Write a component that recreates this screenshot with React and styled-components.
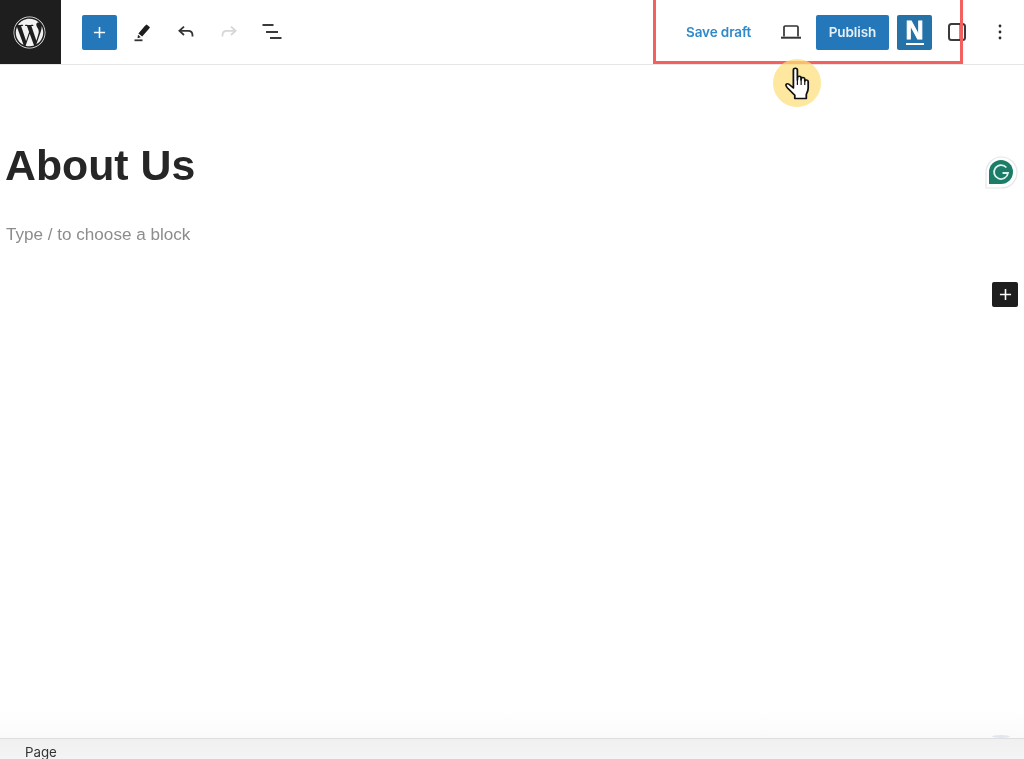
import React from 'react';
import styled, { createGlobalStyle } from 'styled-components';
import { FaWordpress } from 'react-icons/fa';

const Global = createGlobalStyle`
  html, body { margin: 0; padding: 0; background: #fff; }
  body { font-family: "Inter", "Liberation Sans", sans-serif; overflow: hidden; }
`;

const Page = styled.div`
  position: relative;
  width: 1024px;
  height: 759px;
  display: flex;
  flex-direction: column;
  overflow: hidden;
  background: #fff;
  filter: blur(0.45px);
`;

const TopBar = styled.header`
  flex: none;
  height: 64px;
  display: flex;
  align-items: center;
  border-bottom: 1px solid #e6e6e6;
`;

const LogoTile = styled.div`
  flex: none;
  width: 61px;
  height: 64px;
  box-sizing: border-box;
  padding-right: 3px;
  background: #1e1e1e;
  display: flex;
  align-items: center;
  justify-content: center;
  color: #f2f2f2;
  font-size: 33px;
`;

const LeftTools = styled.div`
  display: flex;
  align-items: center;
  margin-left: 21px;
`;

const AddButton = styled.div`
  width: 35px;
  height: 35px;
  border-radius: 2px;
  background: #2478b9;
  display: flex;
  align-items: center;
  justify-content: center;
  margin-right: 4px;
`;

const ToolIcon = styled.div`
  flex: none;
  width: ${p => p.$w || 43}px;
  height: 36px;
  display: flex;
  align-items: center;
  justify-content: center;
`;

const RightTools = styled.div`
  margin-left: auto;
  display: flex;
  align-items: center;
  padding-right: 6px;
`;

const SaveDraft = styled.span`
  color: #3089c9;
  font-size: 13.5px;
  font-weight: 600;
  width: 67px;
  white-space: nowrap;
  letter-spacing: -0.1px;
  margin-right: 16px;
`;

const Publish = styled.div`
  width: 73px;
  height: 35px;
  margin-left: 4px;
  border-radius: 2px;
  background: #2478b9;
  color: #e6f0f8;
  font-size: 13.5px;
  font-weight: 600;
  letter-spacing: -0.1px;
  display: flex;
  align-items: center;
  justify-content: center;
`;

const NTile = styled.div`
  width: 35px;
  height: 35px;
  box-sizing: border-box;
  padding-top: 3px;
  margin-left: 8px;
  border-radius: 2px;
  background: #2472a8;
  display: flex;
  flex-direction: column;
  align-items: center;
  color: #fff;
`;

const NLetter = styled.span`
  font-family: "Liberation Sans", sans-serif;
  font-weight: 700;
  font-size: 25px;
  line-height: 25px;
  height: 25px;
  -webkit-text-stroke: 0.8px #fff;
`;

const NBar = styled.span`
  width: 18px;
  height: 2px;
  background: #fff;
`;

const Content = styled.main`
  flex: 1;
  padding: 74px 0 0 5px;
  background: linear-gradient(to bottom, #fff 0, #fff 645px, #fafafa 674px);
  border-bottom: 1px solid #dedede;
`;

const Title = styled.h1`
  margin: 0;
  font-family: "Liberation Sans", Arial, sans-serif;
  font-size: 42.8px;
  line-height: 52px;
  font-weight: 700;
  color: #262626;
`;

const Placeholder = styled.p`
  margin: 32px 0 0 1px;
  font-family: "Liberation Sans", Arial, sans-serif;
  font-size: 17.1px;
  line-height: 24px;
  color: #8c8c8c;
`;

const Footer = styled.footer`
  flex: none;
  height: 20px;
  box-sizing: border-box;
  padding: 6px 0 0 25px;
  background: linear-gradient(to bottom, #f0f0f0, #f4f4f4);
  color: #333;
  font-size: 13.3px;
  line-height: 14px;
`;

const RedBox = styled.div`
  position: absolute;
  left: 653px;
  top: -3px;
  width: 310px;
  height: 67px;
  box-sizing: border-box;
  border: 3px solid #f4605f;
  pointer-events: none;
`;

const CursorHalo = styled.div`
  position: absolute;
  left: 773px;
  top: 59px;
  width: 48px;
  height: 48px;
  border-radius: 50%;
  background: rgba(253, 222, 120, 0.72);
  display: flex;
  align-items: center;
  justify-content: center;
`;

const Grammarly = styled.div`
  position: absolute;
  left: 985px;
  top: 156px;
  width: 33px;
  height: 33px;
`;

const FloatingAdd = styled.div`
  position: absolute;
  left: 992px;
  top: 282px;
  width: 26px;
  height: 25px;
  border-radius: 2px;
  background: #1e1e1e;
  display: flex;
  align-items: center;
  justify-content: center;
`;

const PeekingBadge = styled.div`
  position: absolute;
  left: 992px;
  top: 735px;
  width: 18px;
  height: 3px;
  border-radius: 50%;
  background: #e2e5ee;
`;

const Plus = ({ size, color }) => (
  <svg width={size} height={size} viewBox="0 0 14 14" fill="none" stroke={color} strokeWidth="1.7">
    <path d="M7 1v12M1 7h12" />
  </svg>
);

export default function App() {
  return (
    <>
      <Global />
      <Page>
        <TopBar>
          <LogoTile><FaWordpress /></LogoTile>
          <LeftTools>
            <AddButton><Plus size={13} color="#f4f8fb" /></AddButton>
            <ToolIcon>
              <svg width="20" height="20" viewBox="0 0 20 20">
                <path d="M13.6 2.400l3.400 2.800-1.200 1.900-6.600 7.500-3.800-3 6.400-7.700z M5 12.800l2.800 2.400-3.300 1z" fill="#1e1e1e" />
                <path d="M1.500 18.300h8" stroke="#333" strokeWidth="1.800" />
              </svg>
            </ToolIcon>
            <ToolIcon>
              <svg width="20" height="20" viewBox="0 0 20 20" fill="none" stroke="#333" strokeWidth="1.800">
                <path d="M8 4.600L3.400 8.800 8 13" />
                <path d="M3.600 8.800h8.600c2.600 0 4.300 1.800 4.300 4.400v1.400" />
              </svg>
            </ToolIcon>
            <ToolIcon>
              <svg width="20" height="20" viewBox="0 0 20 20" fill="none" stroke="#d6d6d6" strokeWidth="1.800">
                <path d="M12 4.600l4.600 4.200L12 13" />
                <path d="M16.400 8.800H7.800c-2.600 0-4.300 1.800-4.300 4.400v1.400" />
              </svg>
            </ToolIcon>
            <ToolIcon>
              <svg width="20" height="20" viewBox="0 0 20 20" fill="none" stroke="#3a3a3a" strokeWidth="2">
                <path d="M0.500 3h11M4 10h12M8 16h11.500" />
              </svg>
            </ToolIcon>
          </LeftTools>
          <RightTools>
            <SaveDraft>Save draft</SaveDraft>
            <ToolIcon $w={43}>
              <svg width="22" height="16" viewBox="0 0 22 16" fill="none" stroke="#333">
                <path d="M4 12.500V3.200c0-.7.500-1.200 1.200-1.200h11.600c.7 0 1.200.5 1.200 1.200v9.300" strokeWidth="1.700" />
                <path d="M1 13.700h20" strokeWidth="2" />
              </svg>
            </ToolIcon>
            <Publish>Publish</Publish>
            <NTile>
              <NLetter>N</NLetter>
              <NBar />
            </NTile>
            <ToolIcon $w={50}>
              <svg width="18" height="18" viewBox="0 0 18 18" fill="none" stroke="#3a3a3a" strokeWidth="2">
                <rect x="1" y="1" width="16" height="16" rx="2.500" />
                <path d="M12.500 1v16" />
              </svg>
            </ToolIcon>
            <ToolIcon $w={36}>
              <svg width="4" height="16" viewBox="0 0 4 16" fill="#2b2b2b">
                <circle cx="2" cy="2" r="1.400" />
                <circle cx="2" cy="8" r="1.400" />
                <circle cx="2" cy="14" r="1.400" />
              </svg>
            </ToolIcon>
          </RightTools>
        </TopBar>
        <Content>
          <Title>About Us</Title>
          <Placeholder>Type / to choose a block</Placeholder>
        </Content>
        <Footer>Page</Footer>

        <RedBox />
        <PeekingBadge />
        <CursorHalo>
          <svg width="27" height="33" viewBox="0 0 23 33" preserveAspectRatio="none" fill="#fff" stroke="#111" strokeWidth="1.500" strokeLinejoin="round">
            <path d="M8 3c0-2.400 3.400-2.400 3.400 0v10l.1-2.200c0-2 3-2 3 0V13l.2-1.200c.2-1.900 3-1.600 3 .3V14c.3-1.600 2.900-1.400 2.900.6v6.500c0 3-.8 4.300-1.600 6.200v4.200H9.200v-3.200L3.400 21.600c-1.600-2.100-2.200-3.400-1.500-4.300.8-1 2.200-.4 3.400 1L8 21z" />
            <path d="M11.400 13v5M14.600 13v5M17.700 13v5" strokeWidth="1" fill="none" />
          </svg>
        </CursorHalo>
        <Grammarly>
          <svg width="33" height="33" viewBox="0 0 33 33">
            <path d="M16.500 1a15.500 15.500 0 1 1 0 31H1V16.500A15.500 15.500 0 0 1 16.500 1z" fill="#fff" stroke="#e4e6ea" strokeWidth="1.200" />
            <path d="M16 4a12 12 0 1 1 0 24H4V16A12 12 0 0 1 16 4z" fill="#1b7d68" />
            <path d="M21.400 11.500a7 7 0 1 0 1.600 5.500h-5.500" fill="none" stroke="#dff1ec" strokeWidth="1.800" />
          </svg>
        </Grammarly>
        <FloatingAdd><Plus size={13} color="#fff" /></FloatingAdd>
      </Page>
    </>
  );
}
